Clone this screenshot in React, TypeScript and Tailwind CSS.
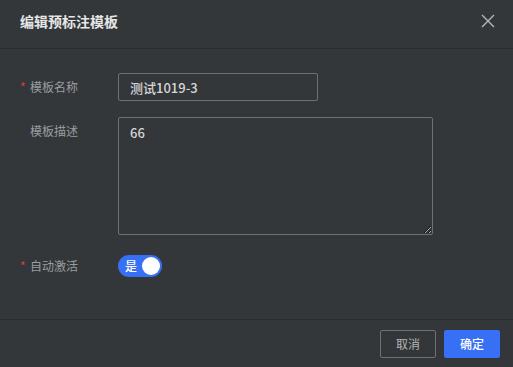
import { useState } from "react";

const font = { fontFamily: '"Noto Sans CJK SC", "Noto Sans", sans-serif' };

const App = () => {
  const [name, setName] = useState("测试1019-3");
  const [desc, setDesc] = useState("66");
  const [active, setActive] = useState(true);

  return (
    <div className="w-[513px] h-[367px] bg-[#33373a] flex flex-col" style={font}>
      <div className="h-[49px] shrink-0 border-b border-[#2a2d2f] flex items-start justify-between pl-[20px] pr-[18px] pt-[11px]">
        <span className="text-[14px] leading-[20px] font-bold text-[#e6e6e6]">编辑预标注模板</span>
        <button className="mt-[3px] text-[#b8b8b8]">
          <svg width="14" height="14" viewBox="0 0 14 14" fill="none" stroke="currentColor" strokeWidth="1.4">
            <path d="M1 1L13 13M13 1L1 13" />
          </svg>
        </button>
      </div>

      <div className="flex-1 pt-[24px] pl-[20px]">
        <div className="flex items-center h-[28px]">
          <div className="w-[98px] flex items-center text-[12px] text-[#9a9c9e]">
            <span className="w-[10px] text-[#e03a3a]">*</span>
            <span>模板名称</span>
          </div>
          <input
            value={name}
            onChange={(e) => setName(e.target.value)}
            className="w-[200px] h-[28px] rounded-[2px] border border-[#6e7173] bg-transparent px-[11px] text-[13px] font-medium text-[#d6d6d6] outline-none"
          />
        </div>

        <div className="flex items-start mt-[16px]">
          <div className="w-[98px] flex items-center text-[12px] text-[#9a9c9e] pt-[5px]">
            <span className="w-[10px]"></span>
            <span>模板描述</span>
          </div>
          <textarea
            value={desc}
            onChange={(e) => setDesc(e.target.value)}
            className="w-[315px] h-[118px] rounded-[2px] border border-[#6e7173] bg-transparent px-[11px] py-[5px] text-[13px] font-medium leading-[20px] text-[#d6d6d6] outline-none"
          />
        </div>

        <div className="flex items-center mt-[20px] h-[22px]">
          <div className="w-[98px] flex items-center text-[12px] text-[#9a9c9e]">
            <span className="w-[10px] text-[#e03a3a]">*</span>
            <span>自动激活</span>
          </div>
          <button
            onClick={() => setActive(!active)}
            className={`w-[44px] h-[22px] rounded-full flex items-center px-[2px] ${active ? "bg-[#3870f5] justify-between" : "bg-[#5a5d60] justify-between flex-row-reverse"}`}
          >
            <span className="text-[12px] font-medium text-white pl-[5px] leading-none">{active ? "是" : "否"}</span>
            <span className="w-[18px] h-[18px] rounded-full bg-white"></span>
          </button>
        </div>
      </div>

      <div className="h-[48px] shrink-0 border-t border-[#2a2d2f] flex items-start justify-end gap-[8px] pr-[13px] pt-[10px]">
        <button className="w-[56px] h-[28px] rounded-[2px] border border-[#6e7173] text-[12px] text-[#b4b4b4]">取消</button>
        <button className="w-[56px] h-[28px] rounded-[2px] bg-[#3870f5] text-[12px] font-medium text-white">确定</button>
      </div>
    </div>
  );
};

export default App;
